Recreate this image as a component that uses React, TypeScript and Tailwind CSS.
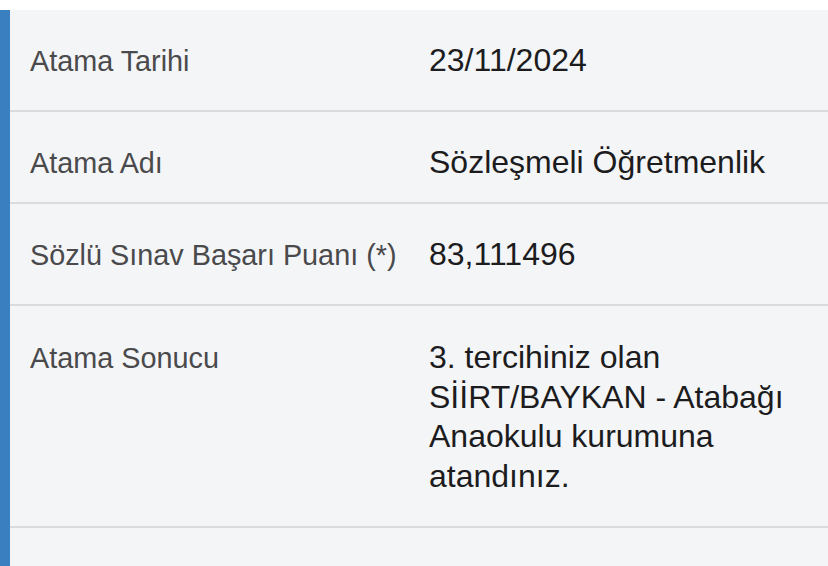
import React from "react";

const rows = [
  { label: "Atama Tarihi", value: "23/11/2024", h: "h-[102px]", pt: "pt-[31px]" },
  { label: "Atama Adı", value: "Sözleşmeli Öğretmenlik", h: "h-[92px]", pt: "pt-[31px]" },
  { label: "Sözlü Sınav Başarı Puanı (*)", value: "83,111496", h: "h-[102px]", pt: "pt-[31px]" },
  {
    label: "Atama Sonucu",
    value: "3. tercihiniz olan SİİRT/BAYKAN - Atabağı Anaokulu kurumuna atandınız.",
    h: "h-[222px]",
    pt: "pt-[32px]",
  },
];

export default function App() {
  return (
    <div
      className="w-[828px] h-[566px] bg-white pt-[10px] overflow-hidden"
      style={{ fontFamily: '"Liberation Sans", Arial, sans-serif' }}
    >
      <div className="flex h-[556px] bg-[#f4f5f7]">
        <div className="w-[10px] shrink-0 bg-[#3a80c1]" />
        <div className="flex-1">
          {rows.map((r) => (
            <div
              key={r.label}
              className={`flex border-b-2 border-[#dbdbdd] ${r.h} ${r.pt}`}
            >
              <div className="w-[419px] shrink-0 pl-[20px] text-[28.8px] leading-[40px] text-[#4a4a4c]">
                {r.label}
              </div>
              <div className="w-[375px] text-[32px] leading-[39.5px] text-[#1c1c1e]">
                {r.value}
              </div>
            </div>
          ))}
        </div>
      </div>
    </div>
  );
}
